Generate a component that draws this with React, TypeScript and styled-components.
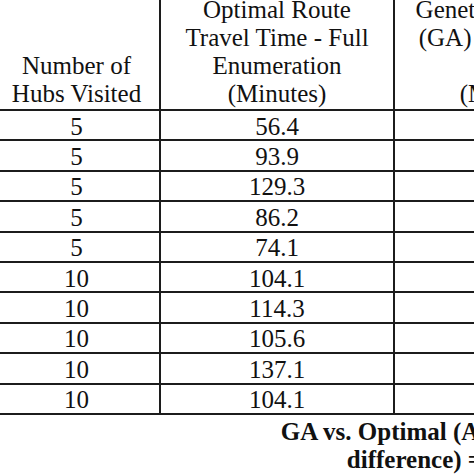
import styled, { createGlobalStyle } from 'styled-components';

const GlobalStyle = createGlobalStyle`
  html, body {
    margin: 0;
    padding: 0;
    background: #fff;
    overflow: hidden;
  }
  body {
    font-family: 'Liberation Serif', 'Times New Roman', serif;
    color: #111;
  }
`;

const Page = styled.div`
  width: 474px;
  height: 474px;
  overflow: hidden;
  position: relative;
`;

const Sheet = styled.div`
  margin-top: -20px;
  margin-left: -6px;
  width: 841px;
`;

const Grid = styled.div`
  display: grid;
  grid-template-columns: 167px 234px 230px 210px;
  grid-template-rows: 131px repeat(10, 30.4px);
`;

const HeadCell = styled.div`
  box-sizing: border-box;
  border-right: 2px solid #1c1c1c;
  border-bottom: 2px solid #1c1c1c;
  display: flex;
  flex-direction: column;
  justify-content: flex-end;
  align-items: center;
  text-align: center;
  font-size: 25px;
  line-height: 28px;
  padding-bottom: 1px;
  white-space: nowrap;
`;

const Line = styled.span`
  display: block;
  height: 28px;
`;

const Cell = styled.div`
  box-sizing: border-box;
  border-right: 2px solid #1c1c1c;
  border-bottom: 2px solid #1c1c1c;
  display: flex;
  align-items: center;
  justify-content: center;
  font-size: 25px;
  line-height: 28px;
  padding-top: 3px;
`;

const Caption = styled.div`
  text-align: center;
  font-weight: 700;
  font-size: 25px;
  line-height: 28px;
  padding-top: 3px;
`;

const headers: string[][] = [
  ['', '', 'Number of', 'Hubs Visited'],
  ['Optimal Route', 'Travel Time - Full', 'Enumeration', '(Minutes)'],
  ['Genetic Algorithm', '(GA) Travel Time', '- Best', '(Minutes)'],
  ['', '', '', ''],
];

const rows: [string, string][] = [
  ['5', '56.4'],
  ['5', '93.9'],
  ['5', '129.3'],
  ['5', '86.2'],
  ['5', '74.1'],
  ['10', '104.1'],
  ['10', '114.3'],
  ['10', '105.6'],
  ['10', '137.1'],
  ['10', '104.1'],
];

export default function App() {
  return (
    <Page>
      <GlobalStyle />
      <Sheet>
        <Grid>
          {headers.map((lines, i) => (
            <HeadCell key={i}>
              {lines.map((l, j) => (
                <Line key={j}>{l}</Line>
              ))}
            </HeadCell>
          ))}
          {rows.map(([hubs, optimal], i) => (
            <>
              <Cell key={`a${i}`}>{hubs}</Cell>
              <Cell key={`b${i}`}>{optimal}</Cell>
              <Cell key={`c${i}`} />
              <Cell key={`d${i}`} />
            </>
          ))}
        </Grid>
        <Caption>
          GA vs. Optimal (Average
          <br />
          difference) =
        </Caption>
      </Sheet>
    </Page>
  );
}
